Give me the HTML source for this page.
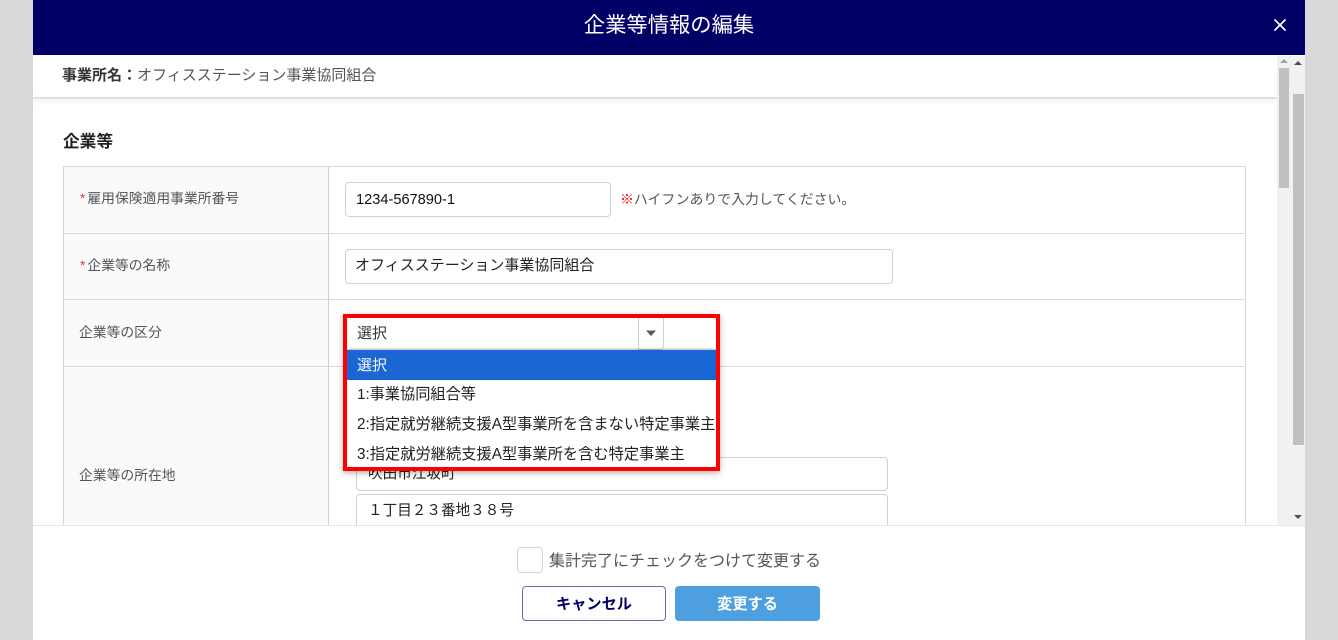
<!DOCTYPE html>
<html lang="ja"><head><meta charset="utf-8">
<style>
html,body{margin:0;padding:0;width:1338px;height:640px;overflow:hidden;background:#d9d9d9}
body{position:relative;font-family:"Liberation Sans","Noto Sans CJK JP",sans-serif;color:#3e3e3c}
div,span{position:absolute;box-sizing:border-box}
.t{white-space:nowrap;line-height:20px}
.t span{position:static}
.in{background:#fff;border:1px solid #d0d0d0;border-radius:4px}
</style></head><body>
<div id="modal" style="left:33px;top:0;width:1272px;height:640px;background:#fff;overflow:hidden;filter:blur(.3px)">
<div style="left:0;top:0;width:1272px;height:55px;background:#000066"></div>
<div class="t" style="left:0;top:15px;width:1272px;text-align:center;color:#fff;font-size:21.3px;line-height:20px;">企業等情報の編集</div>
<svg style="position:absolute;left:1240px;top:18px" width="14" height="14" viewBox="0 0 14 14"><path d="M1.5 1.5L12.5 12.5M12.5 1.5L1.5 12.5" stroke="#fff" stroke-width="1.7" fill="none"/></svg>

<div style="left:0;top:97px;width:1244px;height:2px;background:#e0e0e0;box-shadow:0 2px 4px rgba(0,0,0,.1)"></div>
<div class="t" style="left:29px;top:66px;font-size:15px;color:#555"><span style="font-weight:bold;color:#333;">事業所名：</span>オフィスステーション事業協同組合</div>
<div class="t" style="left:30px;top:132px;font-size:16.7px;font-weight:bold;color:#222">企業等</div>

<div style="left:30px;top:165.5px;width:1183px;height:400px;border:solid #d8d8d8;border-width:1.5px 1.5px 0 1.5px"></div>
<div style="left:31px;top:167px;width:265px;height:360px;background:#fafafa;border-right:1px solid #d0d0d0"></div>
<div style="left:31px;top:232.5px;width:1181px;height:1.5px;background:#dcdcdc"></div>
<div style="left:31px;top:298.5px;width:1181px;height:1.5px;background:#dcdcdc"></div>
<div style="left:31px;top:365.5px;width:1181px;height:1.5px;background:#dcdcdc"></div>

<div class="t" style="left:47px;top:189px;font-size:13.8px;color:#555"><span style="color:#e63a3a;margin-right:2px">*</span>雇用保険適用事業所番号</div>
<div class="t" style="left:47px;top:256px;font-size:13.8px;color:#555"><span style="color:#e63a3a;margin-right:2px">*</span>企業等の名称</div>
<div class="t" style="left:46px;top:323px;font-size:13.8px;color:#555">企業等の区分</div>
<div class="t" style="left:46px;top:466px;font-size:13.8px;color:#555">企業等の所在地</div>

<div class="in" style="left:312px;top:182px;width:266px;height:35px"></div>
<div class="t" style="left:323px;top:190px;font-size:14.6px;color:#111">1234-567890-1</div>
<div class="t" style="left:587px;top:189px;font-size:13.9px;color:#555"><span style="color:#f00;font-weight:bold">※</span>ハイフンありで入力してください。</div>

<div class="in" style="left:312px;top:249px;width:548px;height:35px"></div>
<div class="t" style="left:322px;top:256px;font-size:15px;color:#222">オフィスステーション事業協同組合</div>

<div class="in" style="left:323px;top:457px;width:532px;height:34px"></div>
<div class="t" style="left:335px;top:464px;font-size:14.6px;color:#222">吹田市江坂町</div>
<div class="in" style="left:323px;top:494px;width:532px;height:40px"></div>
<div class="t" style="left:335px;top:501px;font-size:14.6px;color:#222">１丁目２３番地３８号</div>

<!-- select -->
<div style="left:310px;top:314px;width:377px;height:157px;box-shadow:0 2px 6px rgba(0,0,0,.3)"></div>
<div style="left:314px;top:318px;width:369px;height:32px;background:#fff"></div>
<div style="left:605px;top:318px;width:26px;height:32px;background:#fff;border:1px solid #d0d0d0;border-top:0;border-radius:0 0 4px 0"></div>
<svg style="position:absolute;left:612px;top:330px" width="12" height="7" viewBox="0 0 12 7"><path d="M1 .5H11L6 6Z" fill="#5c5c5c"/></svg>
<div class="t" style="left:324px;top:324px;font-size:15px;color:#333">選択</div>
<div style="left:314px;top:350px;width:369px;height:30px;background:#1a66d2;box-shadow:0 -1px 2px rgba(0,0,0,.3)"></div>
<div style="left:314px;top:380px;width:369px;height:87px;background:#fff"></div>
<div class="t" style="left:324px;top:356px;font-size:15px;color:#fff">選択</div>
<div class="t" style="left:324px;top:385px;font-size:15.2px;color:#222">1:事業協同組合等</div>
<div class="t" style="left:324px;top:415px;font-size:15.25px;color:#222">2:指定就労継続支援A型事業所を含まない特定事業主</div>
<div class="t" style="left:324px;top:445px;font-size:15.25px;color:#222">3:指定就労継続支援A型事業所を含む特定事業主</div>
<div style="left:310px;top:314px;width:377px;height:157px;border:4px solid #f00"></div>

<!-- scrollbars -->
<div style="left:1244px;top:56px;width:28px;height:469px;background:#f1f1f1"></div>
<div style="left:1246px;top:68px;width:10px;height:120px;background:#c0c0c0"></div>
<div style="left:1260px;top:94px;width:11px;height:351px;background:#c0c0c0"></div>
<svg style="position:absolute;left:1246px;top:58px" width="10" height="6" viewBox="0 0 10 6"><path d="M5 1L9 5H1Z" fill="#a3a3a3"/></svg>
<svg style="position:absolute;left:1260px;top:60px" width="10" height="6" viewBox="0 0 10 6"><path d="M5 1L9 5H1Z" fill="#505050"/></svg>
<svg style="position:absolute;left:1260px;top:514px" width="10" height="6" viewBox="0 0 10 6"><path d="M1 1H9L5 5Z" fill="#505050"/></svg>

<!-- footer -->
<div style="left:0;top:525px;width:1272px;height:115px;background:#fff;border-top:1px solid #e6e6e6"></div>
<div style="left:484px;top:547px;width:26px;height:26px;background:#fff;border:1px solid #d4d4d4;border-radius:4px"></div>
<div class="t" style="left:516px;top:552px;font-size:16px;line-height:20px;color:#555">集計完了にチェックをつけて変更する</div>
<div style="left:489px;top:586px;width:144px;height:35px;background:#fff;border:1.5px solid #6b6bab;border-radius:4px"></div>
<div class="t" style="left:489px;top:595px;width:144px;text-align:center;font-size:15.2px;font-weight:bold;color:#000066">キャンセル</div>
<div style="left:642px;top:586px;width:145px;height:35px;background:#4e9fdf;border-radius:4px"></div>
<div class="t" style="left:642px;top:595px;width:145px;text-align:center;font-size:15.2px;font-weight:bold;color:#fff">変更する</div>
</div>
</body></html>
